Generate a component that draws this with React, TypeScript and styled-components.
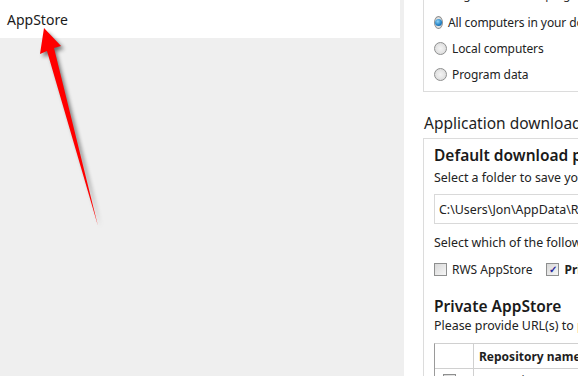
import styled, { createGlobalStyle } from 'styled-components'

const GlobalStyle = createGlobalStyle`
  body {
    margin: 0;
    font-family: 'Noto Sans', 'Open Sans', sans-serif;
    color: #000;
  }
`

const Page = styled.div`
  position: relative;
  width: 578px;
  height: 376px;
  overflow: hidden;
  display: flex;
  background: #efefef;
`

const LeftPane = styled.div`
  width: 400px;
  flex-shrink: 0;
  background: #efefef;
`

const NavRow = styled.div`
  height: 38px;
  background: #fff;
  display: flex;
  align-items: center;
  padding-left: 7px;
  font-size: 14px;
  color: #1a1a1a;
`

const RightPane = styled.div`
  margin-left: 4px;
  flex: 1;
  background: #fff;
  padding-left: 19px;
  overflow: hidden;
  white-space: nowrap;
`

const GroupBox = styled.div<{ $top?: number }>`
  border: 1px solid #dcdcdc;
  border-right: none;
  margin-top: ${({ $top }) => $top ?? 0}px;
  padding-left: 10px;
`

const Cut = styled.div`
  margin-top: -13px;
  height: 22px;
  font-size: 12px;
  line-height: 16px;
  color: #333;
`

const RadioRow = styled.label`
  height: 26px;
  display: flex;
  align-items: center;
  gap: 5px;
  font-size: 12px;
  letter-spacing: -0.1px;
  color: #222;
  &:last-child {
    margin-bottom: 4px;
  }
`

const RadioDot = styled.span<{ $on?: boolean }>`
  width: 11px;
  height: 11px;
  border-radius: 50%;
  border: 1px solid #8e8f8f;
  background: radial-gradient(circle at 50% 50%, #f4f4f4 0%, #d6d6d6 100%);
  display: flex;
  align-items: center;
  justify-content: center;
  &::after {
    content: '';
    display: ${({ $on }) => ($on ? 'block' : 'none')};
    width: 7px;
    height: 7px;
    border-radius: 50%;
    background: radial-gradient(circle at 40% 35%, #8fd3f5 0%, #1f7fc4 60%, #0f4f86 100%);
  }
`

const SectionTitle = styled.div`
  margin-top: 18px;
  height: 26px;
  padding-left: 1px;
  font-size: 15.5px;
  line-height: 26px;
  color: #1e1e1e;
`

const SubTitle = styled.div<{ $top?: number }>`
  margin-top: ${({ $top }) => $top ?? 0}px;
  font-size: 15.5px;
  font-weight: 600;
  line-height: 22px;
  color: #1a1a1a;
`

const Note = styled.div<{ $top?: number }>`
  margin-top: ${({ $top }) => $top ?? 0}px;
  font-size: 12.4px;
  line-height: 18px;
  color: #222;
`

const PathInput = styled.div`
  margin-top: 7px;
  height: 28px;
  border: 1px solid #d9d9d9;
  border-right: none;
  display: flex;
  align-items: center;
  padding-left: 4px;
  font-size: 12.4px;
  color: #222;
`

const CheckRow = styled.div`
  margin-top: 8px;
  display: flex;
  align-items: center;
  height: 18px;
  gap: 14px;
`

const CheckItem = styled.label<{ $bold?: boolean }>`
  display: flex;
  align-items: center;
  gap: 5px;
  font-size: 12px;
  font-weight: ${({ $bold }) => ($bold ? 700 : 400)};
  color: #222;
`

const CheckBox = styled.span<{ $on?: boolean }>`
  width: 11px;
  height: 11px;
  border: 1px solid #8e8f8f;
  background: linear-gradient(135deg, #d8d8d8, #f6f6f6);
  display: flex;
  align-items: center;
  justify-content: center;
  color: #2a2a9a;
  font-size: 10px;
  font-weight: 700;
  line-height: 1;
`

const Grid = styled.div`
  margin-top: 8px;
  border-left: 1px solid #9a9a9a;
  border-top: 1px solid #d0d0d0;
`

const GridHead = styled.div`
  display: flex;
  height: 24px;
  border-bottom: 1px solid #d0d0d0;
`

const GridCell = styled.div<{ $w?: number; $bold?: boolean }>`
  width: ${({ $w }) => ($w ? `${$w}px` : 'auto')};
  flex: ${({ $w }) => ($w ? 'none' : 1)};
  border-right: ${({ $w }) => ($w ? '1px solid #d0d0d0' : 'none')};
  display: flex;
  align-items: center;
  padding-left: ${({ $w }) => ($w ? 8 : 5)}px;
  font-size: 12px;
  font-weight: ${({ $bold }) => ($bold ? 700 : 400)};
  color: #1e1e1e;
`

const GridRow = styled.div`
  display: flex;
  height: 22px;
`

const Arrow = styled.svg`
  position: absolute;
  left: 0;
  top: 0;
  pointer-events: none;
`

export default function App() {
  return (
    <>
      <GlobalStyle />
      <Page>
        <LeftPane>
          <NavRow>AppStore</NavRow>
        </LeftPane>
        <RightPane>
          <GroupBox $top={-1}>
            <Cut>Change where new plug-ins are installed</Cut>
            <RadioRow>
              <RadioDot $on />
              All computers in your domain
            </RadioRow>
            <RadioRow>
              <RadioDot />
              Local computers
            </RadioRow>
            <RadioRow>
              <RadioDot />
              Program data
            </RadioRow>
          </GroupBox>
          <SectionTitle>Application download</SectionTitle>
          <GroupBox $top={2}>
            <SubTitle $top={5}>Default download path</SubTitle>
            <Note $top={3}>Select a folder to save your downloaded apps</Note>
            <PathInput>C:\Users\Jon\AppData\Roaming</PathInput>
            <Note $top={10}>Select which of the following AppStores to use</Note>
            <CheckRow>
              <CheckItem>
                <CheckBox />
                RWS AppStore
              </CheckItem>
              <CheckItem $bold>
                <CheckBox $on>✓</CheckBox>
                Private AppStore
              </CheckItem>
            </CheckRow>
            <SubTitle $top={17}>Private AppStore</SubTitle>
            <Note>Please provide URL(s) to private AppStore repositories</Note>
            <Grid>
              <GridHead>
                <GridCell $w={30} />
                <GridCell $bold>Repository name</GridCell>
              </GridHead>
              <GridRow>
                <GridCell $w={30}>
                  <CheckBox $on>✓</CheckBox>
                </GridCell>
                <GridCell>Enterprise AppStore</GridCell>
              </GridRow>
            </Grid>
          </GroupBox>
        </RightPane>
        <Arrow width="578" height="376" viewBox="0 0 578 376">
          <defs>
            <filter id="sh" x="-50%" y="-50%" width="200%" height="200%">
              <feGaussianBlur stdDeviation="2" />
            </filter>
          </defs>
          <path
            d="M47 32 L64 49 L56 51 L101 228 L50 54 L43 57 Z"
            fill="#000"
            opacity="0.55"
            filter="url(#sh)"
          />
          <path d="M44 28 L61 46 L54 48 L98 226 L47 51 L40 54 Z" fill="#f00" />
        </Arrow>
      </Page>
    </>
  )
}
